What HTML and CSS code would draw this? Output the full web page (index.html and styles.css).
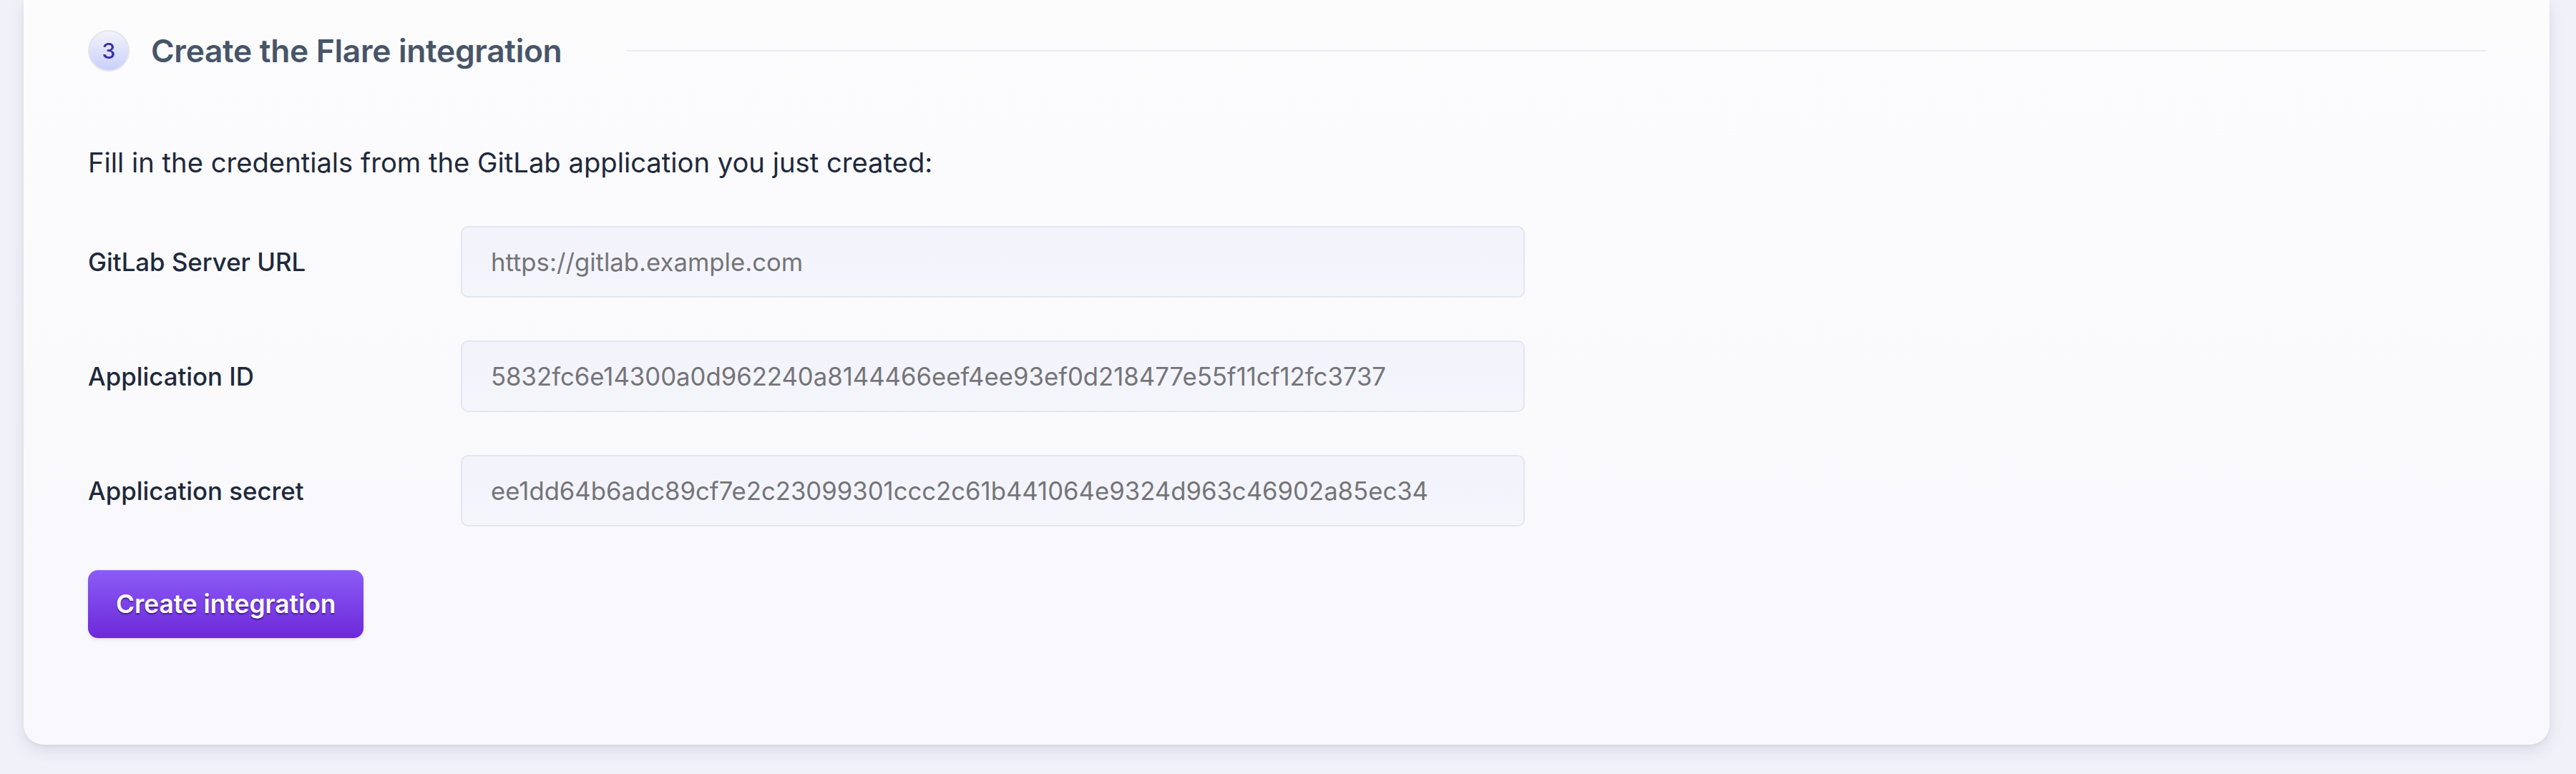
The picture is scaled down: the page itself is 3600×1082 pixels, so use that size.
FILE: index.html
```html
<!DOCTYPE html>
<html lang="en">
<head>
<meta charset="utf-8">
<title>Create the Flare integration</title>
<link rel="stylesheet" href="styles.css">
</head>
<body>
<section class="card">
  <div class="step-head">
    <span class="step-num">3</span>
    <h2 class="step-title">Create the Flare integration</h2>
    <span class="step-line"></span>
  </div>
  <p class="intro">Fill in the credentials from the GitLab application you just created:</p>
  <form class="form">
    <label class="label" for="url">GitLab Server URL</label>
    <input class="input" id="url" type="text" placeholder="https://gitlab.example.com">
    <label class="label" for="appid">Application ID</label>
    <input class="input" id="appid" type="text" value="5832fc6e14300a0d962240a8144466eef4ee93ef0d218477e55f11cf12fc3737">
    <label class="label" for="secret">Application secret</label>
    <input class="input" id="secret" type="text" value="ee1dd64b6adc89cf7e2c23099301ccc2c61b441064e9324d963c46902a85ec34">
    <div class="actions">
      <button class="btn" type="button">Create integration</button>
    </div>
  </form>
</section>
</body>
</html>
```

FILE: styles.css
```css
html, body {
  margin: 0;
  padding: 0;
}
body {
  background: #f1f1f9;
  font-family: Inter, "Liberation Sans", sans-serif;
  width: 3600px;
  height: 1082px;
  overflow: hidden;
}
.card {
  margin: 0 37px 0 33px;
  padding: 42px 89px 149px 90px;
  background: linear-gradient(180deg, #fcfcfd 0%, #f8f8fd 100%);
  border-radius: 0 0 28px 28px;
  box-shadow: 0 8px 22px rgba(60, 60, 110, 0.12), 0 2px 4px rgba(60, 60, 110, 0.06);
}
.step-head {
  display: flex;
  align-items: center;
  height: 58px;
}
.step-num {
  box-sizing: border-box;
  width: 58px;
  height: 58px;
  flex: none;
  border-radius: 50%;
  border: 2px solid #e4e5ec;
  background: linear-gradient(180deg, #f3f3fb 0%, #c9cffb 100%);
  color: #3730a3;
  font-size: 30px;
  font-weight: 500;
  display: flex;
  align-items: center;
  justify-content: center;
}
.step-title {
  margin: 0 0 0 30px;
  font-size: 44.3px;
  font-weight: 600;
  color: #475569;
  letter-spacing: -0.3px;
  white-space: nowrap;
}
.step-line {
  flex: 1;
  height: 2px;
  margin-left: 91px;
  background: #e9eaee;
}
.intro {
  margin: 100px 0 0;
  font-size: 38.2px;
  line-height: 54px;
  color: #1e293b;
}
.form {
  margin-top: 62px;
  display: grid;
  grid-template-columns: 521px 1487px;
  row-gap: 60px;
  align-items: center;
}
.label {
  font-size: 34.8px;
  font-weight: 500;
  color: #1e293b;
}
.input {
  box-sizing: border-box;
  height: 100px;
  width: 100%;
  margin: 0;
  padding: 0 40px;
  border: 2px solid #e2e7ef;
  border-radius: 10px;
  background: linear-gradient(180deg, #f2f3fb 0%, #f5f6fc 100%);
  font-family: Inter, "Liberation Sans", sans-serif;
  font-size: 34.7px;
  color: #747479;
  outline: none;
}
.input::placeholder {
  color: #747479;
  opacity: 1;
}
.actions {
  grid-column: 1 / -1;
  padding-top: 1px;
}
.btn {
  height: 95px;
  padding: 0 39px;
  border: none;
  border-radius: 14px;
  background: linear-gradient(180deg, #8b5cf6 0%, #6d28d9 100%);
  color: #ffffff;
  font-family: Inter, "Liberation Sans", sans-serif;
  font-size: 35.3px;
  font-weight: 600;
  text-shadow: 0 2px 2px rgba(30, 0, 60, 0.55);
  box-shadow: 0 2px 5px rgba(80, 40, 160, 0.12);
  cursor: pointer;
}
```
